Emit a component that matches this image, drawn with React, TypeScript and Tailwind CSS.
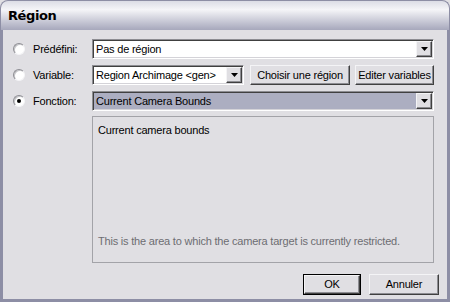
import type { ReactNode } from "react";

function Radio({ checked }: { checked?: boolean }) {
  return (
    <span className="relative w-[12px] h-[12px] rounded-full bg-white border border-t-[#8d8d92] border-l-[#8d8d92] border-r-[#f4f4f6] border-b-[#f4f4f6] shadow-[inset_1px_1px_0_#c4c4c8] flex items-center justify-center">
      {checked && <span className="w-[4px] h-[4px] rounded-full bg-black" />}
    </span>
  );
}

function Arrow() {
  return (
    <span className="w-[16px] self-stretch bg-[#e0dfe3] border border-t-[#f4f4f6] border-l-[#f4f4f6] border-r-[#404040] border-b-[#404040] shadow-[inset_-1px_-1px_0_#8d8d92] flex items-center justify-center">
      <svg width="7" height="4" viewBox="0 0 7 4">
        <path d="M0 0h7L3.5 4Z" fill="#000" />
      </svg>
    </span>
  );
}

function Combo({ text, selected, className = "" }: { text: string; selected?: boolean; className?: string }) {
  return (
    <div
      className={`h-[20px] flex items-stretch border border-t-[#8d8d92] border-l-[#8d8d92] border-r-white border-b-white shadow-[inset_1px_1px_0_#404040,inset_-1px_-1px_0_#d4d3d8] p-[1px] ${className}`}
    >
      <div className={`flex-1 flex items-center pl-[2px] ${selected ? "bg-[#acaec1]" : "bg-white"}`}>{text}</div>
      <Arrow />
    </div>
  );
}

function Button({ children, def, className = "" }: { children: ReactNode; def?: boolean; className?: string }) {
  return (
    <div className={`${def ? "border border-black" : ""} ${className}`}>
      <div className="h-full flex items-center justify-center bg-[#e0dfe3] border border-t-[#f4f4f6] border-l-[#f4f4f6] border-r-[#404040] border-b-[#404040] shadow-[inset_-1px_-1px_0_#8d8d92]">
        {children}
      </div>
    </div>
  );
}

export default function App() {
  return (
    <div className="w-[450px] h-[302px] flex flex-col bg-[#e0dfe3] text-black text-[11px] tracking-[-0.2px] font-['Liberation_Sans',Arial,sans-serif]">
      {/* title bar */}
      <div className="h-[30px] shrink-0 rounded-t-[8px] border border-b-0 border-[#8d8ea5] bg-gradient-to-b from-[#dcdde6] via-[#f5f5f8] via-30% to-[#a7a8bc] flex items-center pl-[7px]">
        <span className="text-[13px] font-bold font-['DejaVu_Sans',sans-serif] tracking-[-0.4px]">Région</span>
      </div>

      {/* body */}
      <div className="flex-1 flex flex-col border-x-[3px] border-b-[3px] border-[#8d8ea5] pt-[9px] pl-[10px] pr-[13px] pb-[4px]">
        <div className="flex flex-col gap-[6px]">
          <div className="flex items-center">
            <div className="w-[79px] flex items-center gap-[8px]">
              <Radio />
              <span>Prédéfini:</span>
            </div>
            <Combo text="Pas de région" className="flex-1" />
          </div>
          <div className="flex items-center">
            <div className="w-[79px] flex items-center gap-[8px]">
              <Radio />
              <span>Variable:</span>
            </div>
            <Combo text="Region Archimage <gen>" className="w-[152px]" />
            <Button className="ml-[6px] w-[100px] h-[20px]">Choisir une région</Button>
            <Button className="ml-[5px] flex-1 h-[20px]">Editer variables</Button>
          </div>
          <div className="flex items-center">
            <div className="w-[79px] flex items-center gap-[8px]">
              <Radio checked />
              <span>Fonction:</span>
            </div>
            <Combo text="Current Camera Bounds" selected className="flex-1" />
          </div>
        </div>

        <div className="ml-[79px] mt-[5px] h-[147px] border border-[#a3a3a8] flex flex-col justify-between px-[5px] pt-[5px] pb-[13px]">
          <span>Current camera bounds</span>
          <span className="text-[#6d6d72]">This is the area to which the camera target is currently restricted.</span>
        </div>

        <div className="mt-auto flex justify-end gap-[8px]">
          <Button def className="w-[58px] h-[21px]">OK</Button>
          <Button className="w-[70px] h-[21px] mr-[-5px]">Annuler</Button>
        </div>
      </div>
    </div>
  );
}
